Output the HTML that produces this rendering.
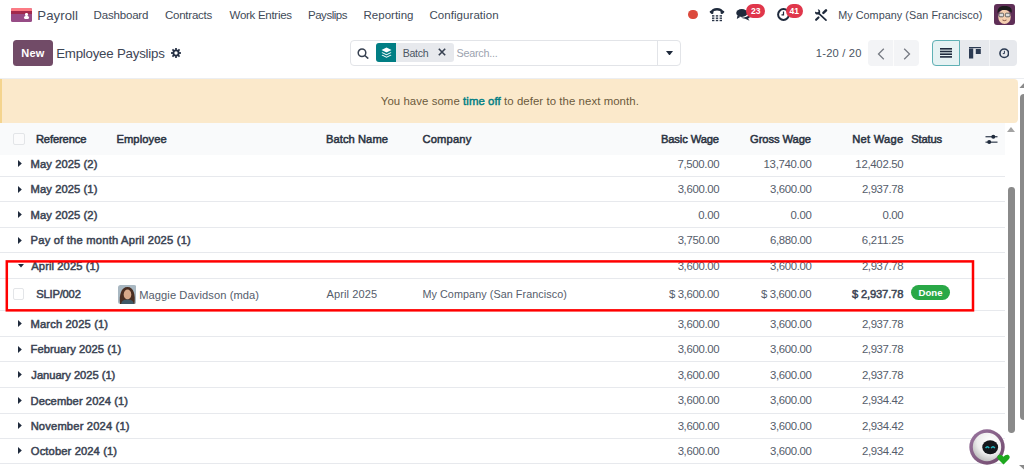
<!DOCTYPE html><html><head><meta charset="utf-8"><style>
html,body{margin:0;padding:0;width:1024px;height:473px;overflow:hidden;background:#fff;font-family:"Liberation Sans",sans-serif;}
.t{position:absolute;white-space:nowrap;line-height:1;}
.a{position:absolute;}
</style></head><body>
<div class="a" style="left:11px;top:7.8px;width:20.5px;height:14px;border-radius:1.5px;overflow:hidden;background:#974c86"><div class="a" style="left:0;top:0;width:21px;height:3.1px;background:#fc7b84"></div><div class="a" style="left:0;top:3.1px;width:21px;height:3px;background:#a2294c"></div><div class="a" style="left:14.1px;top:5.3px;width:2.7px;height:2.7px;border-radius:50%;background:#fff"></div><div class="a" style="left:13.4px;top:8.6px;width:4.6px;height:2.4px;border-radius:1.5px;background:#fff"></div></div>
<div id="t0" class="t" style="left:37.34px;top:9.43px;font-size:13.2px;color:#434b59;font-weight:400;letter-spacing:0.055px;">Payroll</div>
<div id="t1" class="t" style="left:93.56px;top:9.67px;font-size:11.5px;color:#414a58;font-weight:400;letter-spacing:-0.174px;">Dashboard</div>
<div id="t2" class="t" style="left:164.89px;top:9.67px;font-size:11.5px;color:#414a58;font-weight:400;letter-spacing:-0.224px;">Contracts</div>
<div id="t3" class="t" style="left:229.56px;top:9.67px;font-size:11.5px;color:#414a58;font-weight:400;letter-spacing:-0.283px;">Work Entries</div>
<div id="t4" class="t" style="left:308.05px;top:9.67px;font-size:11.5px;color:#414a58;font-weight:400;letter-spacing:-0.496px;">Payslips</div>
<div id="t5" class="t" style="left:363.56px;top:9.67px;font-size:11.5px;color:#414a58;font-weight:400;letter-spacing:0.002px;">Reporting</div>
<div id="t6" class="t" style="left:429.39px;top:9.67px;font-size:11.5px;color:#414a58;font-weight:400;letter-spacing:0.069px;">Configuration</div>
<div class="a" style="left:688px;top:9.8px;width:9.6px;height:9.6px;border-radius:50%;background:#dc4a3d"></div>
<svg class="a" style="left:709px;top:7px" width="16" height="15" viewBox="0 0 16 15">
<path d="M2.4 5.4 C4.2 1.2 11.8 1.2 13.6 5.4" fill="none" stroke="#1f2a3c" stroke-width="2.3"/>
<ellipse cx="2.6" cy="5.3" rx="2.1" ry="1.3" fill="#1f2a3c" transform="rotate(30 2.6 5.3)"/>
<ellipse cx="13.4" cy="5.3" rx="2.1" ry="1.3" fill="#1f2a3c" transform="rotate(-30 13.4 5.3)"/>
<g fill="#2a3548">
<rect x="3" y="8.2" width="2.4" height="1.4"/><rect x="6.8" y="8.2" width="2.4" height="1.4"/><rect x="10.6" y="8.2" width="2.4" height="1.4"/>
<rect x="3" y="10.5" width="2.4" height="1.4"/><rect x="6.8" y="10.5" width="2.4" height="1.4"/><rect x="10.6" y="10.5" width="2.4" height="1.4"/>
<rect x="3" y="12.8" width="2.4" height="1.4"/><rect x="6.8" y="12.8" width="2.4" height="1.4"/><rect x="10.6" y="12.8" width="2.4" height="1.4"/>
</g></svg>
<svg class="a" style="left:736px;top:8px" width="15" height="13" viewBox="0 0 15 13">
<ellipse cx="5.8" cy="5" rx="5.6" ry="3.9" fill="#1f2a3c"/>
<path d="M1.5 7.5 L0.8 11 L4.5 8.8 Z" fill="#1f2a3c"/>
<path d="M13.8 6.5 C14.8 8.5 13.8 10 12 10.6 L13.5 12.8 L9.2 10.8 C7.5 10.8 6 10.3 5.2 9.6 C9 9.6 12.6 8.5 13.8 6.5 Z" fill="#1f2a3c"/>
</svg>
<div class="a" style="left:746px;top:4px;width:18.5px;height:13.5px;border-radius:7px;background:#e0364b"></div>
<div id="t7" class="t" style="left:750.90px;top:6.62px;font-size:8.6px;color:#fff;font-weight:700;">23</div>
<svg class="a" style="left:777px;top:8px" width="13" height="13" viewBox="0 0 13 13">
<circle cx="6.5" cy="6.5" r="5.4" fill="none" stroke="#1f2a3c" stroke-width="2"/>
<path d="M6.5 3.5 V6.8 H4.5" fill="none" stroke="#1f2a3c" stroke-width="1.2"/>
</svg>
<div class="a" style="left:785.6px;top:4px;width:17.2px;height:13.6px;border-radius:7px;background:#e0364b"></div>
<div id="t8" class="t" style="left:789.60px;top:6.62px;font-size:8.6px;color:#fff;font-weight:700;">41</div>
<svg class="a" style="left:814px;top:8px" width="14" height="14" viewBox="0 0 14 14">
<defs><mask id="jaw"><rect width="14" height="14" fill="#fff"/><path d="M-1 3 L3 -1 L4.6 3.4 L3.4 4.6 Z" fill="#000"/></mask></defs>
<path d="M4.2 4.8 L12 12.2" stroke="#1f2a3c" stroke-width="1.7" stroke-linecap="round"/>
<circle cx="3.6" cy="3.9" r="2.6" fill="#1f2a3c" mask="url(#jaw)"/>
<path d="M9.4 4.9 L12 2.3" stroke="#1f2a3c" stroke-width="2.5" stroke-linecap="round"/>
<path d="M2.1 11.8 L4.5 9.4" stroke="#1f2a3c" stroke-width="2.1" stroke-linecap="round"/>
</svg>
<div id="t9" class="t" style="left:838.17px;top:10.06px;font-size:10.8px;color:#414a58;font-weight:400;letter-spacing:0.053px;">My Company (San Francisco)</div>
<svg class="a" style="left:994px;top:4px" width="21" height="21" viewBox="0 0 21 21">
<rect x="0" y="0" width="21" height="21" rx="3" fill="#5f2f57"/>
<ellipse cx="10.5" cy="12.8" rx="6.3" ry="7.2" fill="#f5cfb0"/>
<path d="M3.6 9.5 C3 3 7 1.8 11 2 C16 2 18.5 4 17.6 9 C16 6.5 13 5.5 9 6 C6.5 6.2 4.8 7.3 3.6 9.5 Z" fill="#1c1c1c"/>
<rect x="5" y="9.2" width="4.6" height="3.6" rx="1" fill="#ddd" stroke="#555" stroke-width="0.9"/>
<rect x="11.4" y="9.2" width="4.6" height="3.6" rx="1" fill="#ddd" stroke="#555" stroke-width="0.9"/>
<path d="M8.5 16 Q10.5 17.3 12.5 16" stroke="#7a4a3a" stroke-width="0.9" fill="none"/>
</svg>
<div class="a" style="left:13px;top:39.7px;width:40px;height:26px;border-radius:3.5px;background:#714b67"></div>
<div id="t10" class="t" style="left:21.32px;top:48.29px;font-size:11.0px;color:#fff;font-weight:700;letter-spacing:0.247px;">New</div>
<div id="t11" class="t" style="left:56.15px;top:46.74px;font-size:13.3px;color:#3e4655;font-weight:400;letter-spacing:-0.227px;">Employee Payslips</div>
<svg class="a" style="left:170.6px;top:48.3px" width="10" height="10" viewBox="0 0 10 10">
<g fill="#253044"><circle cx="5" cy="5" r="3.5"/>
<rect x="4.15" y="0" width="1.7" height="10"/><rect x="0" y="4.15" width="10" height="1.7"/>
<rect x="4.15" y="0" width="1.7" height="10" transform="rotate(45 5 5)"/><rect x="4.15" y="0" width="1.7" height="10" transform="rotate(-45 5 5)"/></g>
<circle cx="5" cy="5" r="1.7" fill="#fff"/>
</svg>
<div class="a" style="left:349.5px;top:40px;width:329px;height:23.8px;border:1px solid #e2e4e8;border-radius:4px;background:#fff"></div>
<div class="a" style="left:657px;top:41px;width:1px;height:24px;background:#e2e4e8"></div>
<svg class="a" style="left:665.5px;top:50.5px" width="7" height="4.5" viewBox="0 0 7 4.5"><path d="M0 0 H7 L3.5 4.5 Z" fill="#1f2a3c"/></svg>
<svg class="a" style="left:357px;top:48.3px" width="12.5" height="11" viewBox="0 0 12.5 11">
<circle cx="5" cy="4.8" r="3.8" fill="none" stroke="#374151" stroke-width="1.5"/><path d="M7.8 7.5 L11.3 10.6" stroke="#374151" stroke-width="1.6"/></svg>
<div class="a" style="left:376px;top:43.3px;width:77.5px;height:18.6px;border-radius:3px;background:#e7e9ed"></div>
<div class="a" style="left:376px;top:43.3px;width:20.2px;height:18.6px;border-radius:3px 0 0 3px;background:#017e84"></div>
<svg class="a" style="left:380.5px;top:46.5px" width="11" height="12" viewBox="0 0 11 12">
<path d="M5.5 0.5 L10.5 3 L5.5 5.5 L0.5 3 Z" fill="#fff"/>
<path d="M1.5 5.3 L5.5 7.3 L9.5 5.3 L10.5 5.8 L5.5 8.3 L0.5 5.8 Z" fill="#fff"/>
<path d="M1.5 7.8 L5.5 9.8 L9.5 7.8 L10.5 8.3 L5.5 10.8 L0.5 8.3 Z" fill="#fff"/>
</svg>
<div id="t12" class="t" style="left:402.64px;top:48.23px;font-size:10.6px;color:#4b5563;font-weight:400;letter-spacing:-0.294px;">Batch</div>
<svg class="a" style="left:437.5px;top:48.3px" width="8" height="8" viewBox="0 0 8 8"><path d="M0.8 0.8 L7.2 7.2 M7.2 0.8 L0.8 7.2" stroke="#374151" stroke-width="1.6"/></svg>
<div id="t13" class="t" style="left:456.57px;top:48.06px;font-size:10.8px;color:#9ca3af;font-weight:400;letter-spacing:-0.249px;">Search...</div>
<div id="t14" class="t" style="left:815.86px;top:48.02px;font-size:11.2px;color:#4b5563;font-weight:400;letter-spacing:0.175px;">1-20 / 20</div>
<div class="a" style="left:868px;top:40px;width:50.8px;height:25.7px;border-radius:4px;background:#f3f4f6"></div>
<div class="a" style="left:892.8px;top:40px;width:1px;height:25.7px;background:#fff;opacity:.7"></div>
<svg class="a" style="left:876.5px;top:47.5px" width="8" height="12" viewBox="0 0 8 12"><path d="M6.8 0.8 L1.5 6 L6.8 11.2" stroke="#777b84" stroke-width="1.3" fill="none"/></svg>
<svg class="a" style="left:902.5px;top:47.5px" width="8" height="12" viewBox="0 0 8 12"><path d="M1.2 0.8 L6.5 6 L1.2 11.2" stroke="#777b84" stroke-width="1.3" fill="none"/></svg>
<div class="a" style="left:932px;top:39.5px;width:85px;height:26.3px;border-radius:4px;background:#e7e9ed"></div>
<div class="a" style="left:988.6px;top:39.5px;width:1px;height:26.3px;background:#f3f4f6"></div>
<div class="a" style="left:932px;top:39.5px;width:26px;height:24.3px;border:1px solid #5fb1b5;border-radius:4px 0 0 4px;background:#e6f2f3"></div>
<svg class="a" style="left:940px;top:48px" width="12" height="10" viewBox="0 0 12 10"><g fill="#1f2a3c">
<rect x="0" y="0" width="12" height="1.6"/><rect x="0" y="2.7" width="12" height="1.6"/><rect x="0" y="5.4" width="12" height="1.6"/><rect x="0" y="8.1" width="12" height="1.6"/></g></svg>
<svg class="a" style="left:969.3px;top:46.8px" width="12" height="12" viewBox="0 0 12 12"><g fill="#2b3a52">
<rect x="0" y="0" width="12" height="1.2"/><rect x="0" y="1.5" width="4.2" height="10"/><rect x="6.8" y="2" width="5" height="5"/></g></svg>
<svg class="a" style="left:998.5px;top:48px" width="10.5" height="10.5" viewBox="0 0 10.5 10.5">
<circle cx="5.25" cy="5.25" r="4.3" fill="none" stroke="#2b3a52" stroke-width="1.6"/><path d="M5.4 2.8 V5.6 H3.8" stroke="#2b3a52" stroke-width="1" fill="none"/></svg>
<div class="a" style="left:0;top:78px;width:1024px;height:1px;background:#eceef1"></div>
<div class="a" style="left:0;top:79px;width:1017.5px;height:43.8px;border-radius:0 4px 4px 0;background:#fbe9cb;overflow:hidden"><div class="a" style="left:0;top:0;width:2.2px;height:44px;background:#f4d48e"></div></div>
<div id="t15" class="t" style="left:380.81px;top:96.35px;font-size:11.4px;color:#6b5a3c;font-weight:400;letter-spacing:0.071px;">You have some <span style="color:#017e84;-webkit-text-stroke:0.45px #017e84">time off</span> to defer to the next month.</div>
<div class="a" style="left:0;top:122.8px;width:1005px;height:32px;background:#f9fafb"></div>
<div class="a" style="left:13.3px;top:133.3px;width:9.5px;height:9.5px;border:1px solid #e3e5e8;border-radius:2px;background:#fbfbfc"></div>
<div id="t16" class="t" style="left:35.93px;top:133.92px;font-size:11.2px;color:#2b3342;font-weight:400;letter-spacing:-0.144px;-webkit-text-stroke:0.5px #2b3342;">Reference</div>
<div id="t17" class="t" style="left:116.38px;top:133.92px;font-size:11.2px;color:#2b3342;font-weight:400;letter-spacing:0.093px;-webkit-text-stroke:0.5px #2b3342;">Employee</div>
<div id="t18" class="t" style="left:325.93px;top:133.92px;font-size:11.2px;color:#2b3342;font-weight:400;letter-spacing:0.058px;-webkit-text-stroke:0.5px #2b3342;">Batch Name</div>
<div id="t19" class="t" style="left:422.56px;top:133.92px;font-size:11.2px;color:#2b3342;font-weight:400;letter-spacing:0.132px;-webkit-text-stroke:0.5px #2b3342;">Company</div>
<div id="t20" class="t" style="left:911.31px;top:133.92px;font-size:11.2px;color:#2b3342;font-weight:400;letter-spacing:-0.183px;-webkit-text-stroke:0.5px #2b3342;">Status</div>
<div id="t21" class="t" style="left:660.93px;top:133.92px;font-size:11.2px;color:#2b3342;font-weight:400;letter-spacing:-0.125px;-webkit-text-stroke:0.5px #2b3342;">Basic Wage</div>
<div id="t22" class="t" style="left:750.08px;top:133.92px;font-size:11.2px;color:#2b3342;font-weight:400;letter-spacing:-0.083px;-webkit-text-stroke:0.5px #2b3342;">Gross Wage</div>
<div id="t23" class="t" style="left:852.23px;top:133.92px;font-size:11.2px;color:#2b3342;font-weight:400;letter-spacing:0.244px;-webkit-text-stroke:0.5px #2b3342;">Net Wage</div>
<svg class="a" style="left:985px;top:134px" width="13" height="11" viewBox="0 0 13 11"><g fill="#1f2a3c">
<rect x="0.5" y="2.2" width="12" height="1.1"/><circle cx="8.3" cy="2.7" r="2"/>
<rect x="0.5" y="7.6" width="12" height="1.1"/><circle cx="4.2" cy="8.1" r="2"/></g></svg>
<div class="a" style="left:0;top:176.00px;width:1005px;height:1px;background:#e7e9ed"></div>
<svg class="a" style="left:18px;top:160.30px" width="4" height="7" viewBox="0 0 4 7"><path d="M0 0 L3.8 3.5 L0 7 Z" fill="#1f2a3c"/></svg>
<div id="t24" class="t" style="left:30.57px;top:158.82px;font-size:11.2px;color:#3b4453;font-weight:400;letter-spacing:0.081px;-webkit-text-stroke:0.5px #3b4453;">May 2025 (2)</div>
<div id="t25" class="t" style="left:677.56px;top:158.65px;font-size:11.4px;color:#555d6b;font-weight:400;letter-spacing:-0.336px;">7,500.00</div>
<div id="t26" class="t" style="left:763.57px;top:158.65px;font-size:11.4px;color:#555d6b;font-weight:400;letter-spacing:-0.303px;">13,740.00</div>
<div id="t27" class="t" style="left:855.37px;top:158.65px;font-size:11.4px;color:#555d6b;font-weight:400;letter-spacing:-0.292px;">12,402.50</div>
<div class="a" style="left:0;top:201.40px;width:1005px;height:1px;background:#e7e9ed"></div>
<svg class="a" style="left:18px;top:185.70px" width="4" height="7" viewBox="0 0 4 7"><path d="M0 0 L3.8 3.5 L0 7 Z" fill="#1f2a3c"/></svg>
<div id="t28" class="t" style="left:30.57px;top:184.22px;font-size:11.2px;color:#3b4453;font-weight:400;letter-spacing:0.081px;-webkit-text-stroke:0.5px #3b4453;">May 2025 (1)</div>
<div id="t29" class="t" style="left:677.63px;top:184.05px;font-size:11.4px;color:#555d6b;font-weight:400;letter-spacing:-0.345px;">3,600.00</div>
<div id="t30" class="t" style="left:769.92px;top:184.05px;font-size:11.4px;color:#555d6b;font-weight:400;letter-spacing:-0.350px;">3,600.00</div>
<div id="t31" class="t" style="left:861.92px;top:184.05px;font-size:11.4px;color:#555d6b;font-weight:400;letter-spacing:-0.373px;">2,937.78</div>
<div class="a" style="left:0;top:226.90px;width:1005px;height:1px;background:#e7e9ed"></div>
<svg class="a" style="left:18px;top:211.20px" width="4" height="7" viewBox="0 0 4 7"><path d="M0 0 L3.8 3.5 L0 7 Z" fill="#1f2a3c"/></svg>
<div id="t32" class="t" style="left:30.57px;top:209.72px;font-size:11.2px;color:#3b4453;font-weight:400;letter-spacing:0.081px;-webkit-text-stroke:0.5px #3b4453;">May 2025 (2)</div>
<div id="t33" class="t" style="left:698.35px;top:209.55px;font-size:11.4px;color:#555d6b;font-weight:400;letter-spacing:-0.312px;">0.00</div>
<div id="t34" class="t" style="left:790.51px;top:209.55px;font-size:11.4px;color:#555d6b;font-weight:400;letter-spacing:-0.293px;">0.00</div>
<div id="t35" class="t" style="left:882.45px;top:209.55px;font-size:11.4px;color:#555d6b;font-weight:400;letter-spacing:-0.309px;">0.00</div>
<div class="a" style="left:0;top:252.30px;width:1005px;height:1px;background:#e7e9ed"></div>
<svg class="a" style="left:18px;top:236.60px" width="4" height="7" viewBox="0 0 4 7"><path d="M0 0 L3.8 3.5 L0 7 Z" fill="#1f2a3c"/></svg>
<div id="t36" class="t" style="left:30.59px;top:235.12px;font-size:11.2px;color:#3b4453;font-weight:400;letter-spacing:0.201px;-webkit-text-stroke:0.5px #3b4453;">Pay of the month April 2025 (1)</div>
<div id="t37" class="t" style="left:677.63px;top:234.95px;font-size:11.4px;color:#555d6b;font-weight:400;letter-spacing:-0.345px;">3,750.00</div>
<div id="t38" class="t" style="left:769.96px;top:234.95px;font-size:11.4px;color:#555d6b;font-weight:400;letter-spacing:-0.356px;">6,880.00</div>
<div id="t39" class="t" style="left:861.80px;top:234.95px;font-size:11.4px;color:#555d6b;font-weight:400;letter-spacing:-0.223px;">6,211.25</div>
<div class="a" style="left:0;top:278.00px;width:1005px;height:1px;background:#e7e9ed"></div>
<svg class="a" style="left:17.5px;top:264.30px" width="6" height="4" viewBox="0 0 6 4"><path d="M0 0 H6 L3 3.6 Z" fill="#1f2a3c"/></svg>
<div id="t40" class="t" style="left:31.30px;top:260.82px;font-size:11.2px;color:#3b4453;font-weight:400;letter-spacing:0.087px;-webkit-text-stroke:0.5px #3b4453;">April 2025 (1)</div>
<div id="t41" class="t" style="left:677.63px;top:260.65px;font-size:11.4px;color:#555d6b;font-weight:400;letter-spacing:-0.345px;">3,600.00</div>
<div id="t42" class="t" style="left:769.92px;top:260.65px;font-size:11.4px;color:#555d6b;font-weight:400;letter-spacing:-0.350px;">3,600.00</div>
<div id="t43" class="t" style="left:861.92px;top:260.65px;font-size:11.4px;color:#555d6b;font-weight:400;letter-spacing:-0.373px;">2,937.78</div>
<div class="a" style="left:0;top:335.90px;width:1005px;height:1px;background:#e7e9ed"></div>
<svg class="a" style="left:18px;top:320.20px" width="4" height="7" viewBox="0 0 4 7"><path d="M0 0 L3.8 3.5 L0 7 Z" fill="#1f2a3c"/></svg>
<div id="t44" class="t" style="left:30.57px;top:318.72px;font-size:11.2px;color:#3b4453;font-weight:400;letter-spacing:0.126px;-webkit-text-stroke:0.5px #3b4453;">March 2025 (1)</div>
<div id="t45" class="t" style="left:677.63px;top:318.55px;font-size:11.4px;color:#555d6b;font-weight:400;letter-spacing:-0.345px;">3,600.00</div>
<div id="t46" class="t" style="left:769.92px;top:318.55px;font-size:11.4px;color:#555d6b;font-weight:400;letter-spacing:-0.350px;">3,600.00</div>
<div id="t47" class="t" style="left:861.92px;top:318.55px;font-size:11.4px;color:#555d6b;font-weight:400;letter-spacing:-0.373px;">2,937.78</div>
<div class="a" style="left:0;top:361.40px;width:1005px;height:1px;background:#e7e9ed"></div>
<svg class="a" style="left:18px;top:345.70px" width="4" height="7" viewBox="0 0 4 7"><path d="M0 0 L3.8 3.5 L0 7 Z" fill="#1f2a3c"/></svg>
<div id="t48" class="t" style="left:30.59px;top:344.22px;font-size:11.2px;color:#3b4453;font-weight:400;letter-spacing:0.062px;-webkit-text-stroke:0.5px #3b4453;">February 2025 (1)</div>
<div id="t49" class="t" style="left:677.63px;top:344.05px;font-size:11.4px;color:#555d6b;font-weight:400;letter-spacing:-0.345px;">3,600.00</div>
<div id="t50" class="t" style="left:769.92px;top:344.05px;font-size:11.4px;color:#555d6b;font-weight:400;letter-spacing:-0.350px;">3,600.00</div>
<div id="t51" class="t" style="left:861.92px;top:344.05px;font-size:11.4px;color:#555d6b;font-weight:400;letter-spacing:-0.373px;">2,937.78</div>
<div class="a" style="left:0;top:387.10px;width:1005px;height:1px;background:#e7e9ed"></div>
<svg class="a" style="left:18px;top:371.40px" width="4" height="7" viewBox="0 0 4 7"><path d="M0 0 L3.8 3.5 L0 7 Z" fill="#1f2a3c"/></svg>
<div id="t52" class="t" style="left:31.34px;top:369.92px;font-size:11.2px;color:#3b4453;font-weight:400;letter-spacing:-0.038px;-webkit-text-stroke:0.5px #3b4453;">January 2025 (1)</div>
<div id="t53" class="t" style="left:677.63px;top:369.75px;font-size:11.4px;color:#555d6b;font-weight:400;letter-spacing:-0.345px;">3,600.00</div>
<div id="t54" class="t" style="left:769.92px;top:369.75px;font-size:11.4px;color:#555d6b;font-weight:400;letter-spacing:-0.350px;">3,600.00</div>
<div id="t55" class="t" style="left:861.92px;top:369.75px;font-size:11.4px;color:#555d6b;font-weight:400;letter-spacing:-0.373px;">2,937.78</div>
<div class="a" style="left:0;top:412.70px;width:1005px;height:1px;background:#e7e9ed"></div>
<svg class="a" style="left:18px;top:397.00px" width="4" height="7" viewBox="0 0 4 7"><path d="M0 0 L3.8 3.5 L0 7 Z" fill="#1f2a3c"/></svg>
<div id="t56" class="t" style="left:30.51px;top:395.52px;font-size:11.2px;color:#3b4453;font-weight:400;letter-spacing:0.072px;-webkit-text-stroke:0.5px #3b4453;">December 2024 (1)</div>
<div id="t57" class="t" style="left:677.63px;top:395.35px;font-size:11.4px;color:#555d6b;font-weight:400;letter-spacing:-0.345px;">3,600.00</div>
<div id="t58" class="t" style="left:769.92px;top:395.35px;font-size:11.4px;color:#555d6b;font-weight:400;letter-spacing:-0.350px;">3,600.00</div>
<div id="t59" class="t" style="left:861.92px;top:395.35px;font-size:11.4px;color:#555d6b;font-weight:400;letter-spacing:-0.332px;">2,934.42</div>
<div class="a" style="left:0;top:437.90px;width:1005px;height:1px;background:#e7e9ed"></div>
<svg class="a" style="left:18px;top:422.20px" width="4" height="7" viewBox="0 0 4 7"><path d="M0 0 L3.8 3.5 L0 7 Z" fill="#1f2a3c"/></svg>
<div id="t60" class="t" style="left:30.63px;top:420.72px;font-size:11.2px;color:#3b4453;font-weight:400;letter-spacing:0.162px;-webkit-text-stroke:0.5px #3b4453;">November 2024 (1)</div>
<div id="t61" class="t" style="left:677.63px;top:420.55px;font-size:11.4px;color:#555d6b;font-weight:400;letter-spacing:-0.345px;">3,600.00</div>
<div id="t62" class="t" style="left:769.92px;top:420.55px;font-size:11.4px;color:#555d6b;font-weight:400;letter-spacing:-0.350px;">3,600.00</div>
<div id="t63" class="t" style="left:861.92px;top:420.55px;font-size:11.4px;color:#555d6b;font-weight:400;letter-spacing:-0.332px;">2,934.42</div>
<div class="a" style="left:0;top:463.10px;width:1005px;height:1px;background:#e7e9ed"></div>
<svg class="a" style="left:18px;top:447.40px" width="4" height="7" viewBox="0 0 4 7"><path d="M0 0 L3.8 3.5 L0 7 Z" fill="#1f2a3c"/></svg>
<div id="t64" class="t" style="left:30.86px;top:445.92px;font-size:11.2px;color:#3b4453;font-weight:400;letter-spacing:0.108px;-webkit-text-stroke:0.5px #3b4453;">October 2024 (1)</div>
<div id="t65" class="t" style="left:677.63px;top:445.75px;font-size:11.4px;color:#555d6b;font-weight:400;letter-spacing:-0.345px;">3,600.00</div>
<div id="t66" class="t" style="left:769.92px;top:445.75px;font-size:11.4px;color:#555d6b;font-weight:400;letter-spacing:-0.350px;">3,600.00</div>
<div id="t67" class="t" style="left:861.92px;top:445.75px;font-size:11.4px;color:#555d6b;font-weight:400;letter-spacing:-0.332px;">2,934.42</div>
<div class="a" style="left:0;top:310.3px;width:1005px;height:1px;background:#e7e9ed"></div>
<div class="a" style="left:12.7px;top:288.4px;width:9.5px;height:9.5px;border:1px solid #e3e5e8;border-radius:2px;background:#fff"></div>
<div id="t68" class="t" style="left:36.16px;top:288.82px;font-size:11.2px;color:#3b4453;font-weight:400;letter-spacing:-0.189px;-webkit-text-stroke:0.5px #3b4453;">SLIP/002</div>
<svg class="a" style="left:117.5px;top:285.2px" width="18.5" height="19" viewBox="0 0 18.5 19">
<defs><clipPath id="av"><rect width="18.5" height="19" rx="2.5"/></clipPath></defs>
<g clip-path="url(#av)"><rect width="18.5" height="19" fill="#a9b8c2"/>
<path d="M2 19 C1 10 3 2 9.5 2 C16 2 17.5 10 16.5 19 Z" fill="#4a2e22"/>
<ellipse cx="9.5" cy="9.5" rx="3.8" ry="5" fill="#d8a98a"/>
<path d="M3 19 C4 15 7 14.5 9.5 14.5 C12 14.5 15 15 16 19 Z" fill="#3f5866"/>
</g></svg>
<div id="t69" class="t" style="left:139.17px;top:289.66px;font-size:11.15px;color:#555d6b;font-weight:400;letter-spacing:0.082px;">Maggie Davidson (mda)</div>
<div id="t70" class="t" style="left:326.61px;top:288.95px;font-size:11.05px;color:#555d6b;font-weight:400;letter-spacing:0.081px;">April 2025</div>
<div id="t71" class="t" style="left:422.45px;top:289.16px;font-size:10.8px;color:#555d6b;font-weight:400;letter-spacing:0.062px;">My Company (San Francisco)</div>
<div id="t72" class="t" style="left:669.10px;top:288.65px;font-size:11.4px;color:#555d6b;font-weight:400;letter-spacing:-0.393px;">$ 3,600.00</div>
<div id="t73" class="t" style="left:760.89px;top:288.65px;font-size:11.4px;color:#555d6b;font-weight:400;letter-spacing:-0.353px;">$ 3,600.00</div>
<div id="t74" class="t" style="left:852.05px;top:288.82px;font-size:11.2px;color:#3b4453;font-weight:400;letter-spacing:-0.172px;-webkit-text-stroke:0.5px #3b4453;">$ 2,937.78</div>
<div class="a" style="left:911.2px;top:284.8px;width:38.8px;height:15.2px;border-radius:8px;background:#29a847"></div>
<div id="t75" class="t" style="left:918.50px;top:288.17px;font-size:9.6px;color:#fff;font-weight:700;">Done</div>
<svg class="a" style="left:0;top:0" width="1024" height="473"><rect x="6.8" y="261.4" width="966.2" height="48.95" fill="none" stroke="#ff0000" stroke-width="2.5"/></svg>
<div class="a" style="left:1017.5px;top:79px;width:6.5px;height:394px;background:#ffffff"></div>
<svg class="a" style="left:1019px;top:82.5px" width="5" height="5.5" viewBox="0 0 5 5.5"><path d="M0 5.5 L4.5 0.5 L5 0.5 V5.5 Z" fill="#8a8a8a"/></svg>
<div class="a" style="left:1020px;top:94px;width:8px;height:326px;border-radius:4px;background:#8a8a8a"></div>
<svg class="a" style="left:1018.5px;top:465px" width="5.5" height="5" viewBox="0 0 5.5 5"><path d="M0 0 H5.5 V5 Z" fill="#8a8a8a"/></svg>
<svg class="a" style="left:1007.3px;top:126.7px" width="8" height="5" viewBox="0 0 8 5"><path d="M0 5 L4 0 L8 5 Z" fill="#a3a3a3"/></svg>
<div class="a" style="left:1008.2px;top:187px;width:6.8px;height:245.5px;border-radius:3.4px;background:#8a8a8a"></div>
<svg class="a" style="left:969px;top:429px" width="42" height="37" viewBox="0 0 42 37">
<defs><radialGradient id="bg1" cx="0.62" cy="0.3" r="0.85"><stop offset="0" stop-color="#ffffff"/><stop offset="0.55" stop-color="#ececec"/><stop offset="1" stop-color="#a8a8a8"/></radialGradient>
<linearGradient id="rg1" x1="0" y1="0" x2="1" y2="1"><stop offset="0" stop-color="#9a76a0"/><stop offset="1" stop-color="#6e4669"/></linearGradient></defs>
<circle cx="18" cy="18" r="17.7" fill="url(#rg1)"/>
<circle cx="18" cy="18" r="14.2" fill="url(#bg1)"/>
<ellipse cx="21.2" cy="18.2" rx="7.9" ry="7" fill="#14171b"/>
<path d="M16.6 19.2 Q18.4 16.4 20.2 19.2" stroke="#22b8c4" stroke-width="1.5" fill="none"/>
<path d="M22.2 19.2 Q24 16.4 25.8 19.2" stroke="#22b8c4" stroke-width="1.5" fill="none"/>
<path d="M34.5 35.5 L29 30 C27.5 28.5 28.5 25.8 30.8 25.8 C32.2 25.8 33.5 26.7 34.5 27.8 C35.5 26.7 36.8 25.8 38.2 25.8 C40.5 25.8 41.5 28.5 40 30 Z" fill="#1ea81e"/>
</svg>
</body></html>
